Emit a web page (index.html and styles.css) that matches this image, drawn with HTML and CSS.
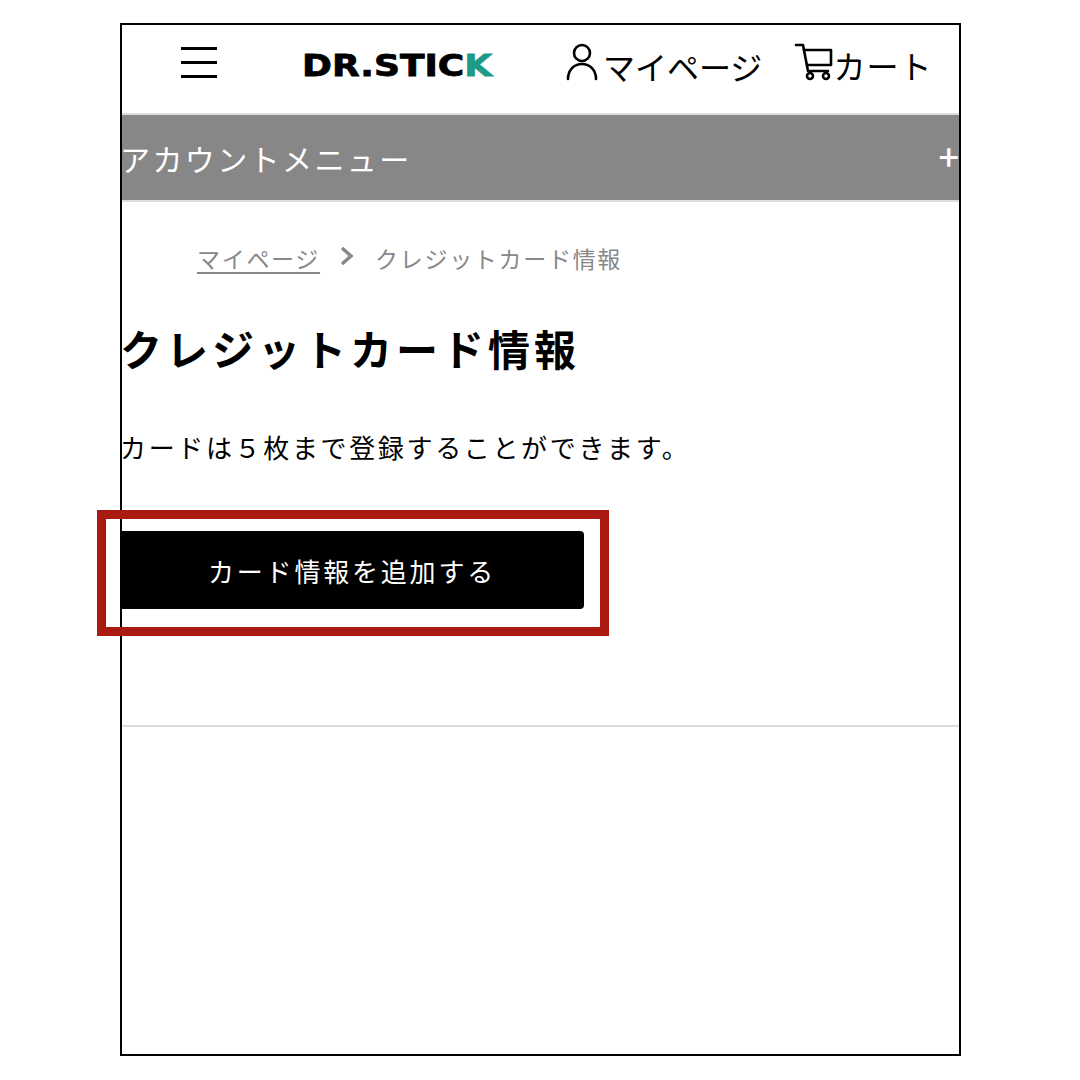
FILE: index.html
```html
<!DOCTYPE html>
<html lang="ja">
<head>
  <title>クレジットカード情報</title>
  <meta charset="utf-8">
  <link rel="stylesheet" href="styles.css">
</head>
<body>

  <div class="screen">
    <header class="site-header">
      <div class="menu-icon"><span></span><span></span><span></span></div>
      <div class="logo"><span class="logo-text">DR.STIC<span class="logo-k">K</span></span></div>
      <a class="head-link mypage">
        <svg width="34" height="38" viewBox="0 0 34 38" fill="none" stroke="#000" stroke-width="2.6" stroke-linecap="round">
          <circle cx="17" cy="10" r="8"/>
          <path d="M3 36c0-9 6-15 14-15s14 6 14 15"/>
        </svg>
        <span>マイページ</span>
      </a>
      <a class="head-link cart">
        <svg width="40" height="38" viewBox="0 0 40 38" fill="none" stroke="#000" stroke-width="2.6" stroke-linecap="round" stroke-linejoin="round">
          <path d="M2 2h7l5 26h20"/>
          <path d="M10 7h27v15H13"/>
          <circle cx="16" cy="33" r="3"/>
          <circle cx="32" cy="33" r="3"/>
        </svg>
        <span>カート</span>
      </a>
    </header>

    <div class="account-bar">
      <span class="account-label">アカウントメニュー</span>
      <span class="plus">+</span>
    </div>

    <nav class="breadcrumb">
      <a class="crumb-link">マイページ</a>
      <svg class="crumb-arrow" width="14" height="20" viewBox="0 0 14 20" fill="none" stroke="#888" stroke-width="3.5">
        <path d="M2 2l9 8-9 8"/>
      </svg>
      <span>クレジットカード情報</span>
    </nav>

    <h1 class="page-title">クレジットカード情報</h1>
    <p class="lead">カードは５枚まで登録することができます。</p>
    <button class="add-card" type="button">カード情報を追加する</button>
    <hr class="divider">

    <div class="highlight"></div>
  </div>

</body>
</html>
```

FILE: styles.css
```css
/* Page frame */
* {
  box-sizing: border-box;
}
body {
  margin: 0;
  height: 1080px;
  background: #fff;
  padding: 23px 0 0 120px;
  font-family: "Noto Sans CJK JP", "Noto Sans", sans-serif;
  color: #000;
}
.screen {
  position: relative;
  width: 841px;
  height: 1033px;
  border: 2px solid #000;
}

/* Header */
.site-header {
  display: flex;
  align-items: flex-start;
  height: 88px;
}
.menu-icon {
  display: flex;
  flex-direction: column;
  gap: 11px;
  width: 36px;
  margin: 22px 0 0 59px;
}
.menu-icon span {
  display: block;
  height: 3px;
  background: #000;
}
.logo {
  width: 190px;
  margin: 22px 0 0 85px;
  font-family: "DejaVu Sans", sans-serif;
  font-weight: 700;
  font-size: 30px;
  line-height: 38px;
  white-space: nowrap;
}
.logo-text {
  display: inline-block;
  transform: scaleX(1.2);
  transform-origin: left center;
  -webkit-text-stroke: 0.8px currentColor;
}
.logo-k {
  color: #1f9a86;
}
.head-link {
  display: flex;
  align-items: flex-start;
  font-size: 32px;
  line-height: 40px;
  white-space: nowrap;
}
.mypage {
  margin: 0 0 0 73px;
  padding-top: 18px;
  gap: 4px;
}
.mypage span {
  padding-top: 3px;
}
.cart {
  margin-left: 32px;
  padding-top: 18px;
  margin-right: -2px;
}
.cart span {
  margin: 2px 0 0 -1px;
  letter-spacing: 1px;
}

/* Account menu bar */
.account-bar {
  display: flex;
  justify-content: space-between;
  align-items: center;
  height: 89px;
  background: #878787;
  border-top: 2px solid #ddd;
  border-bottom: 2px solid #ddd;
  color: #fff;
  font-size: 30px;
  letter-spacing: 2.4px;
  white-space: nowrap;
}
.account-label {
  margin-left: -2px;
}
.plus {
  margin-bottom: 6px;
  font-size: 36px;
  font-weight: 500;
  letter-spacing: 0;
}

/* Breadcrumb */
.breadcrumb {
  display: flex;
  align-items: center;
  height: 30px;
  margin: 41px 0 0 75px;
  color: #888;
  font-size: 23px;
  letter-spacing: 1.7px;
  white-space: nowrap;
}
.crumb-link {
  text-decoration: underline;
  text-underline-offset: 4px;
}
.crumb-arrow {
  margin: 0 21px 4px 20px;
}

/* Content */
.page-title {
  margin: 45px 0 0 -2px;
  font-size: 42px;
  line-height: 60px;
  letter-spacing: 4px;
  font-weight: 700;
}
.lead {
  margin: 49px 0 0 -2px;
  font-size: 26px;
  line-height: 40px;
  letter-spacing: 2.65px;
}
.add-card {
  display: block;
  width: 464px;
  height: 78px;
  margin: 64px 0 0 -2px;
  border: none;
  border-radius: 0 4px 4px 0;
  background: #000;
  color: #fff;
  font: inherit;
  font-size: 26px;
  letter-spacing: 2.8px;
}
.divider {
  margin: 116px 0 0;
  border: none;
  border-top: 2px solid #ddd;
}

/* Red annotation round the button */
.highlight {
  position: absolute;
  left: -25px;
  top: 485px;
  width: 512px;
  height: 126px;
  border: 9px solid #a91a12;
}
```
